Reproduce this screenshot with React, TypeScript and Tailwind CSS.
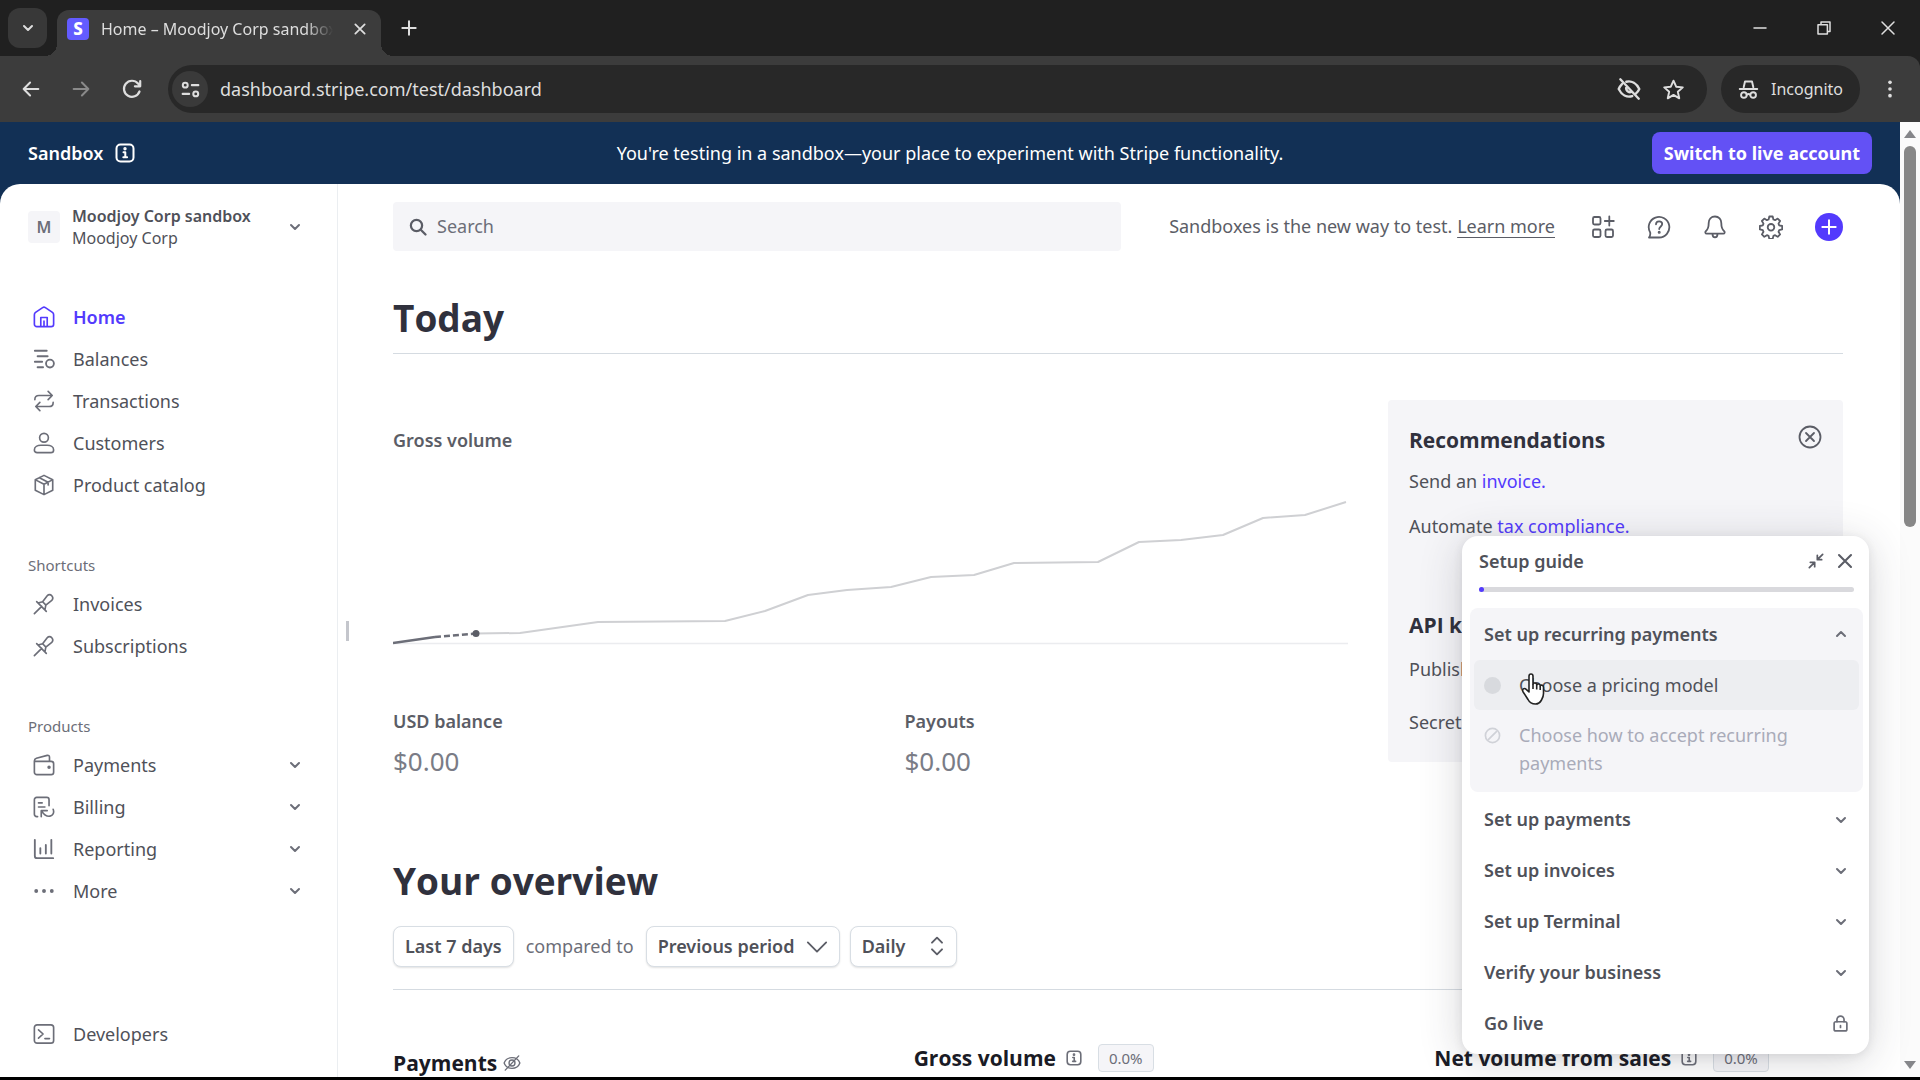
import React from "react";

type IconProps = { className?: string; children: React.ReactNode; sw?: number; box?: number };

function Icon({ className = "size-[22px]", children, sw = 1.8, box = 24 }: IconProps) {
  return (
    <svg
      viewBox={`0 0 ${box} ${box}`}
      className={`shrink-0 ${className}`}
      fill="none"
      stroke="currentColor"
      strokeWidth={sw}
      strokeLinecap="round"
      strokeLinejoin="round"
      aria-hidden="true"
    >
      {children}
    </svg>
  );
}

const Chevron = ({ up = false }: { up?: boolean }) => (
  <Icon className="size-3 text-[#6c6e78]" box={12} sw={2}>
    <path d={up ? "M2 8l4-4 4 4" : "M2 4l4 4 4-4"} />
  </Icon>
);

const InfoIcon = ({ className }: { className: string }) => (
  <Icon className={className} box={20} sw={2}>
    <rect x="1.5" y="1.5" width="17" height="17" rx="4" />
    <path d="M8.5 9.3h1.8v4.7M8.3 14.2h3.8" />
    <circle cx="10" cy="5.8" r="0.7" fill="currentColor" />
  </Icon>
);

const icons = {
  home: (
    <Icon>
      <path d="M1.5 9.5c0-1 .4-1.9 1.3-2.5L10.5 1.7a2.6 2.6 0 0 1 3 0L21.2 7c.9.6 1.3 1.5 1.3 2.5v10.3a2.7 2.7 0 0 1-2.7 2.7H4.2a2.7 2.7 0 0 1-2.7-2.7z" />
      <path d="M8.5 22v-9.5h7V22M12 16.5V22" />
    </Icon>
  ),
  balances: (
    <Icon sw={2}>
      <path d="M2 3h13M5 9h11M2 15h8M5 21h6" />
      <circle cx="18.5" cy="17" r="4.3" />
    </Icon>
  ),
  transactions: (
    <Icon>
      <path d="M2 10.5C2 7.5 4 6 6.5 6H21M16.5 1.5L21 6l-4.5 4.5M22 13.5c0 3-2 4.5-4.5 4.5H3M7.5 22.5L3 18l4.5-4.5" />
    </Icon>
  ),
  customers: (
    <Icon>
      <circle cx="12" cy="6.3" r="4.8" />
      <path d="M1.5 19.5c0-3.3 3.5-5 7-5h7c3.5 0 7 1.7 7 5 0 1.9-1.2 3-3 3h-15c-1.8 0-3-1.1-3-3z" />
    </Icon>
  ),
  box: (
    <Icon>
      <path d="M12 1.5l9.5 4.7v11.6L12 22.5l-9.5-4.7V6.2zM2.8 6.4L12 11.2l9.2-4.8M12 11.2v11M7 4l9.5 4.9V12" />
    </Icon>
  ),
  pin: (
    <Icon>
      <path d="M9.5 14.5L1.5 22.5M4 9.5L14.5 20M5.5 11l5-1.5 5-6.5c1.5-1.6 3.5-1.6 5 0s1.6 3.5 0 5L14 13.3 13 18.5M10.5 9.5l3.6 3.8" />
    </Icon>
  ),
  wallet: (
    <Icon>
      <path d="M1.5 8h18.3a2.7 2.7 0 0 1 2.7 2.7v9.1a2.7 2.7 0 0 1-2.7 2.7H4.2a2.7 2.7 0 0 1-2.7-2.7V7.5c0-1.5.8-2.4 2.2-2.8L15.5 1.5c1.5-.3 2.5.5 2.5 2V8" />
      <circle cx="17.5" cy="14.5" r="1" fill="currentColor" />
    </Icon>
  ),
  billing: (
    <Icon>
      <path d="M5 22.5H4a2.5 2.5 0 0 1-2.5-2.5V4A2.5 2.5 0 0 1 4 1.5h11A2.5 2.5 0 0 1 17.5 4v6.5M6 7.5h4M6 12h7M9 22.5V16h6.5M9.5 16.5c2.5 4 6 6 9 5.5 3-.5 5-3.5 3.5-7.5" />
    </Icon>
  ),
  reporting: (
    <Icon sw={2}>
      <path d="M2 2v17.5A2.5 2.5 0 0 0 4.5 22H22M8 11v6M14 7.5V17M20 2v15" />
    </Icon>
  ),
  more: (
    <Icon sw={0}>
      <g fill="currentColor">
        <circle cx="3.5" cy="12" r="2.1" />
        <circle cx="12" cy="12" r="2.1" />
        <circle cx="20.5" cy="12" r="2.1" />
      </g>
    </Icon>
  ),
  dev: (
    <Icon>
      <rect x="1.5" y="2" width="21" height="20" rx="3" />
      <path d="M6 7.5l5 4.5-5 4.5M13 17h5" />
    </Icon>
  ),
};

type NavItem = { icon: keyof typeof icons; label: string; active?: boolean; expand?: boolean };

function NavRow({ icon, label, active, expand }: NavItem) {
  return (
    <a
      href="#"
      className={`flex h-[42px] items-center gap-[18px] pl-[5px] ${active ? "font-semibold text-[#533afd]" : "text-[#4f5159]"}`}
    >
      <span className={active ? "text-[#533afd]" : "text-[#6c6e78]"}>{icons[icon]}</span>
      <span className="flex-1">{label}</span>
      {expand && <Chevron />}
    </a>
  );
}

const mainNav: NavItem[] = [
  { icon: "home", label: "Home", active: true },
  { icon: "balances", label: "Balances" },
  { icon: "transactions", label: "Transactions" },
  { icon: "customers", label: "Customers" },
  { icon: "box", label: "Product catalog" },
];
const shortcuts: NavItem[] = [
  { icon: "pin", label: "Invoices" },
  { icon: "pin", label: "Subscriptions" },
];
const products: NavItem[] = [
  { icon: "wallet", label: "Payments", expand: true },
  { icon: "billing", label: "Billing", expand: true },
  { icon: "reporting", label: "Reporting", expand: true },
  { icon: "more", label: "More", expand: true },
];

function BrowserChrome() {
  return (
    <header className="shrink-0 bg-[#202020] text-[#dedede]">
      <div className="flex h-14 items-end">
        <button aria-label="Search tabs" className="mb-2 ml-2 flex h-10 w-[39px] items-center justify-center rounded-xl bg-[#383838]">
          <Icon className="size-3" box={12} sw={2}>
            <path d="M2 4l4 4 4-4" />
          </Icon>
        </button>
        <div className="relative ml-2.5 flex h-[46px] w-[324px] items-center rounded-t-xl bg-[#3c3c3c] pr-3 pb-2 pl-2.5 text-[16px]">
          <span className="absolute bottom-0 -left-3 size-3 bg-[radial-gradient(circle_at_0_0,#202020_12px,#3c3c3c_12px)]" />
          <span className="absolute -right-3 bottom-0 size-3 bg-[radial-gradient(circle_at_100%_0,#202020_12px,#3c3c3c_12px)]" />
          <span className="flex h-[22px] w-[22px] items-center justify-center rounded-sm bg-[#635bff] text-[17px] font-extrabold text-white">
            S
          </span>
          <span className="ml-3 w-[232px] overflow-hidden whitespace-nowrap mask-[linear-gradient(to_right,black_88%,transparent)]">
            Home – Moodjoy Corp sandbox
          </span>
          <button aria-label="Close tab" className="ml-5">
            <Icon className="size-3.5" sw={3}>
              <path d="M4 4l16 16M20 4L4 20" />
            </Icon>
          </button>
        </div>
        <button aria-label="New tab" className="mb-[18px] ml-[18px]">
          <Icon className="size-5" sw={2.4}>
            <path d="M12 4v16M4 12h16" />
          </Icon>
        </button>
        <div className="mb-[19px] ml-auto flex items-center gap-[46px] pr-[23px]">
          <button aria-label="Minimize">
            <Icon className="size-[18px]" sw={2}>
              <path d="M4 12h16" />
            </Icon>
          </button>
          <button aria-label="Restore">
            <Icon className="size-[18px]" sw={2}>
              <path d="M4 7.5h12.5V20H4zM8 7V4h12v12.5h-3.5" />
            </Icon>
          </button>
          <button aria-label="Close">
            <Icon className="size-[18px]" sw={2}>
              <path d="M4 4l16 16M20 4L4 20" />
            </Icon>
          </button>
        </div>
      </div>
      <div className="flex h-[66px] items-center rounded-tr-xl bg-[#3c3c3c] pl-5">
        <button aria-label="Back">
          <Icon className="size-[22px]" sw={2.2}>
            <path d="M20 12H4M11 5l-7 7 7 7" />
          </Icon>
        </button>
        <button aria-label="Forward" className="ml-7 text-[#8a8a8a]">
          <Icon className="size-[22px]" sw={2.2}>
            <path d="M4 12h16M13 5l7 7-7 7" />
          </Icon>
        </button>
        <button aria-label="Reload" className="ml-7">
          <Icon className="size-6" sw={2.2}>
            <path d="M19.5 14.5A8 8 0 1 1 18 6.5l2 2.2M20.2 4v5.3h-5.3" />
          </Icon>
        </button>
        <div className="ml-6 flex h-12 flex-1 items-center rounded-full bg-[#282828] pr-[22px] pl-1">
          <span className="flex size-9 items-center justify-center rounded-full bg-[#3a3a3a]">
            <Icon className="size-[21px]" sw={2.3}>
              <circle cx="6" cy="7" r="2.8" />
              <path d="M13.5 7H21M3 17h7.5" />
              <circle cx="18" cy="17" r="2.8" />
            </Icon>
          </span>
          <input
            aria-label="Address"
            defaultValue="dashboard.stripe.com/test/dashboard"
            className="ml-3 min-w-0 flex-1 bg-transparent outline-none"
          />
          <Icon className="size-[26px]" sw={2.2}>
            <path d="M4 3l17 18M9.5 5.3c5-1.3 9.500 1.700 12 6.700-.8 1.700-1.800 3-3 4M5.500 7.500C4.300 8.700 3.300 10.200 2.500 12c2.700 5.500 7.500 8 12.500 6.500M10 9.500a3.500 3.500 0 0 0 4.500 5" />
          </Icon>
          <Icon className="ml-5 size-[23px]" sw={2}>
            <path d="M12 2.800l2.800 6.300 6.900.7-5.200 4.600 1.500 6.800-6-3.600-6 3.600 1.500-6.800-5.200-4.600 6.900-.7z" />
          </Icon>
        </div>
        <button className="ml-3.5 flex h-12 items-center gap-3 rounded-full bg-[#282828] px-[17px] text-[16px]">
          <Icon className="size-[21px]" sw={2.2}>
            <path d="M6.5 9.5L8 2.800h8l1.500 6.700M2 11.500h20M10 18c1.200-1 2.800-1 4 0" />
            <circle cx="6.7" cy="18.3" r="3.2" />
            <circle cx="17.3" cy="18.3" r="3.2" />
          </Icon>
          Incognito
        </button>
        <button aria-label="Browser menu" className="mx-5">
          <Icon className="size-5" sw={0}>
            <g fill="currentColor">
              <circle cx="12" cy="4" r="2.2" />
              <circle cx="12" cy="12" r="2.2" />
              <circle cx="12" cy="20" r="2.2" />
            </g>
          </Icon>
        </button>
      </div>
    </header>
  );
}

function Sidebar() {
  return (
    <aside className="relative flex w-[338px] shrink-0 flex-col border-r border-[#ebeef1] pt-[21px] pr-9 pb-[22px] pl-7">
      <button className="flex items-center text-left text-[16px] text-[#4f5159]">
        <span className="flex size-8 items-center justify-center rounded bg-[#f5f5f8] font-semibold text-[#6c6e78]">M</span>
        <span className="ml-3 flex-1 leading-[22px]">
          <span className="block font-semibold">Moodjoy Corp sandbox</span>
          <span className="block">Moodjoy Corp</span>
        </span>
        <Chevron />
      </button>
      <nav className="mt-[47px] flex flex-1 flex-col">
        {mainNav.map((n) => (
          <NavRow key={n.label} {...n} />
        ))}
        <h2 className="mt-[49px] mb-2 text-[15px] leading-5 text-[#6c6e78]">Shortcuts</h2>
        {shortcuts.map((n) => (
          <NavRow key={n.label} {...n} />
        ))}
        <h2 className="mt-[49px] mb-2 text-[15px] leading-5 text-[#6c6e78]">Products</h2>
        {products.map((n) => (
          <NavRow key={n.label} {...n} />
        ))}
        <div className="mt-auto">
          <NavRow icon="dev" label="Developers" />
        </div>
      </nav>
      <span className="absolute top-[437px] -right-3 h-5 w-[3px] bg-[#c4c6cc]" />
    </aside>
  );
}

function TopBar() {
  return (
    <div className="flex items-center text-[#5b5d66]">
      <label className="flex h-[49px] flex-1 items-center gap-2.5 rounded bg-[#f5f5f8] px-4">
        <Icon className="size-[18px]" sw={3}>
          <circle cx="10" cy="10" r="7.5" />
          <path d="M16 16l6 6" />
        </Icon>
        <input aria-label="Search" placeholder="Search" className="min-w-0 flex-1 bg-transparent outline-none placeholder:text-[#6c6e78]" />
      </label>
      <p className="ml-12 whitespace-nowrap">
        Sandboxes is the new way to test.{" "}
        <a href="#" className="underline decoration-1 underline-offset-4">
          Learn more
        </a>
      </p>
      <div className="ml-9 flex items-center gap-8">
        <button aria-label="Apps">
          <Icon className="size-6">
            <rect x="2" y="2" width="7.5" height="7.5" rx="1.5" />
            <rect x="2" y="14.5" width="7.5" height="7.5" rx="1.5" />
            <rect x="14.5" y="14.5" width="7.5" height="7.5" rx="1.5" />
            <path d="M18.3 1.5v9M13.8 6h9" />
          </Icon>
        </button>
        <button aria-label="Help">
          <Icon className="size-6">
            <path d="M2 22.5h10A10.3 10.3 0 1 0 3.2 17.5c.3 1.8 0 3.5-1.200 5z" />
            <path d="M9 9.3c0-1.8 1.3-3 3.1-3s3.1 1.2 3.1 2.8c0 2.2-3 2.6-3 5" />
            <circle cx="12.2" cy="17.3" r="0.6" fill="currentColor" />
          </Icon>
        </button>
        <button aria-label="Notifications">
          <Icon className="size-6">
            <path d="M12 1.5c-3.8 0-6.3 2.7-6.3 6.5 0 5-.8 6.5-2.9 8.2-1 .9-.5 2.500.9 2.500h16.600c1.400 0 1.900-1.600.9-2.500-2.100-1.700-2.900-3.200-2.900-8.200 0-3.800-2.500-6.500-6.300-6.500zM9.500 19c0 1.900 1 3.300 2.500 3.300s2.500-1.400 2.500-3.300" />
          </Icon>
        </button>
        <button aria-label="Settings">
          <Icon className="size-6">
            <path d="M10.300 1.500h3.400l.7 3 1.700.7 2.600-1.600 2.400 2.400-1.600 2.600.7 1.700 3 .7v3.400l-3 .7-.7 1.700 1.600 2.600-2.400 2.400-2.600-1.600-1.700.7-.7 3h-3.400l-.7-3-1.700-.7-2.600 1.600-2.400-2.400 1.600-2.600-.7-1.700-3-.7V11l3-.7.7-1.700L2.900 6l2.400-2.400 2.600 1.600 1.700-.7z" />
            <circle cx="12" cy="12.3" r="3.3" />
          </Icon>
        </button>
        <button aria-label="Create" className="flex size-7 items-center justify-center rounded-full bg-[#533afd] text-white">
          <Icon className="size-4" sw={3}>
            <path d="M12 2v20M2 12h20" />
          </Icon>
        </button>
      </div>
    </div>
  );
}

const forecast =
  "83,21.5 127,21 205,10 332,9 372,-1 415,-17 454,-22 498,-25 538,-35 581,-37 621,-49 705,-50 746,-70 788,-72 830,-77 870,-94 912,-97 953,-110";

function VolumeChart() {
  return (
    <svg viewBox="0 -120 955 155" className="mt-10 block w-full" fill="none" aria-label="Gross volume chart">
      <path d="M0 31.5h955" stroke="#ebecef" strokeWidth="1.5" />
      <polyline points={forecast} stroke="#cfd0d3" strokeWidth="2" strokeLinejoin="round" />
      <path d="M0 31L42 25" stroke="#6c6e78" strokeWidth="2.5" />
      <path d="M42 25L83 21.5" stroke="#6c6e78" strokeWidth="2.5" strokeDasharray="6 3" />
      <circle cx="83" cy="21.5" r="3.5" fill="#5b5d66" />
    </svg>
  );
}

const sideHead = "font-['Open_Sans','Noto_Sans',sans-serif] text-[21px] leading-7 font-bold whitespace-nowrap";

function Recommendations() {
  return (
    <section className="w-[455px] shrink-0 rounded bg-[#f5f5f8] px-[21px] pt-[25px] pb-7 text-[#4f5159]">
      <div className="flex items-center justify-between">
        <h2 className={`${sideHead} text-[#30313d]`}>Recommendations</h2>
        <button aria-label="Dismiss" className="text-[#5b5d66]">
          <Icon className="mb-1.5 size-6">
            <circle cx="12" cy="12" r="10.5" />
            <path d="M8 8l8 8M16 8l-8 8" />
          </Icon>
        </button>
      </div>
      <p className="mt-[14px] leading-6">
        Send an <a href="#" className="text-[#533afd]">invoice.</a>
      </p>
      <p className="mt-[21px] leading-6">
        Automate <a href="#" className="text-[#533afd]">tax compliance.</a>
      </p>
      <h2 className={`${sideHead} mt-[73px] text-[#30313d]`}>API keys</h2>
      <p className="mt-[18px] leading-6">Publishable key</p>
      <p className="mt-[29px] leading-6">Secret key</p>
    </section>
  );
}

function Metric({ title }: { title: string }) {
  return (
    <div className="flex h-7 items-center">
      <h3 className={`${sideHead} text-[#1a1b25]`}>{title}</h3>
      <InfoIcon className="ml-2.5 size-4 text-[#6c6e78]" />
      <span className="ml-4 rounded border border-[#d8dee4] bg-[#f5f5f8] px-2.5 text-[15px] leading-[26px] text-[#6c6e78]">0.0%</span>
    </div>
  );
}

const filterBox =
  "h-[41px] rounded-lg border border-[#d8dee4] bg-white font-semibold text-[#4f5159] shadow-[0_1px_2px_rgba(0,0,0,0.12)]";

const pageHead = "font-['Open_Sans','Noto_Sans',sans-serif] text-[37px] leading-[44px] font-bold text-[#30313d]";

function Main() {
  return (
    <main className="min-w-0 flex-1 overflow-hidden pt-[18px] pr-[57px] pl-[55px]">
      <TopBar />
      <h1 className={`${pageHead} mt-[45px] border-b border-[#d5dbe1] pb-[13px]`}>Today</h1>
      <div className="mt-[46px] flex items-start gap-10">
        <section className="min-w-0 flex-1 pt-7">
          <h2 className="leading-6 font-semibold text-[#5b5d66]">Gross volume</h2>
          <VolumeChart />
          <div className="mt-[62px] grid grid-cols-2 gap-[68px]">
            {["USD balance", "Payouts"].map((t) => (
              <div key={t}>
                <h2 className="leading-6 font-semibold text-[#5b5d66]">{t}</h2>
                <p className="mt-3 text-[26px] leading-8 text-[#7a7c86]">$0.00</p>
              </div>
            ))}
          </div>
        </section>
        <Recommendations />
      </div>
      <h1 className={`${pageHead} mt-[82px]`}>Your overview</h1>
      <div className="mt-[23px] flex items-center border-b border-[#d5dbe1] pb-[22px]">
        <button className={`${filterBox} px-[11px]`}>Last 7 days</button>
        <span className="mx-3 text-[#6c6e78]">compared to</span>
        <label className="relative text-[#5b5d66]">
          <select aria-label="Comparison period" className={`${filterBox} appearance-none pr-11 pl-[11px]`}>
            <option>Previous period</option>
          </select>
          <Icon className="pointer-events-none absolute top-2.5 right-3 size-[22px]" sw={2}>
            <path d="M2 7l10 10L22 7" />
          </Icon>
        </label>
        <label className="relative ml-2.5 text-[#5b5d66]">
          <select aria-label="Interval" className={`${filterBox} appearance-none pr-[50px] pl-[11px]`}>
            <option>Daily</option>
          </select>
          <Icon className="pointer-events-none absolute top-2.5 right-2.5 size-5" sw={2.3}>
            <path d="M6 8l6-6 6 6M6 16l6 6 6-6" />
          </Icon>
        </label>
      </div>
      <div className="mt-[54px] grid grid-cols-3 gap-28">
        <div className="flex items-center pt-[5px]">
          <h3 className={`${sideHead} text-[#1a1b25]`}>Payments</h3>
          <Icon className="ml-1.5 size-[18px] text-[#6c6e78]">
            <path d="M1.5 12C5 2.5 19 2.5 22.5 12 19 21.5 5 21.5 1.5 12z" />
            <circle cx="12" cy="12" r="4" />
            <path d="M21 2.5L3 21.5" />
          </Icon>
        </div>
        <Metric title="Gross volume" />
        <Metric title="Net volume from sales" />
      </div>
    </main>
  );
}

function SetupGuide() {
  return (
    <section className="absolute right-[31px] bottom-[23px] w-[407px] rounded-2xl bg-white pt-[13px] pr-1.5 pb-[5px] pl-2 text-[#4f5159] shadow-[0_6px_44px_rgba(48,49,61,0.2),0_2px_10px_rgba(48,49,61,0.1)]">
      <div className="flex h-6 items-center px-[9px]">
        <h2 className="flex-1 leading-6 font-semibold">Setup guide</h2>
        <button aria-label="Collapse" className="text-[#5b5d66]">
          <Icon className="size-4" sw={2.6}>
            <path d="M22 2l-8 8M14 3.5V10h6.5M2 22l8-8M3.5 14H10v6.5" />
          </Icon>
        </button>
        <button aria-label="Close guide" className="ml-3 text-[#5b5d66]">
          <Icon className="size-[18px]" sw={2.8}>
            <path d="M4 4l16 16M20 4L4 20" />
          </Icon>
        </button>
      </div>
      <div className="mx-[9px] mt-3.5 h-[5px] rounded-full bg-[#d9d9dd]">
        <div className="size-[5px] rounded-full bg-[#533afd]" />
      </div>
      <div className="mt-4 rounded-lg bg-[#f5f5f8] pb-[15px]">
        <button className="flex h-[52px] w-full items-center justify-between pr-4 pl-3.5 font-semibold">
          Set up recurring payments <Chevron up />
        </button>
        <a href="#" className="relative mx-1 flex h-[50px] items-center rounded-md bg-[#edeef1] pl-2.5">
          <span className="size-[17px] rounded-full bg-[#d8dade]" />
          <span className="ml-[18px]">Choose a pricing model</span>
          <svg viewBox="0 0 26 34" className="absolute top-3 left-[46px] h-[34px] w-[26px]" fill="#fff" stroke="#222" strokeWidth="1.6" strokeLinejoin="round" aria-hidden="true">
            <path d="M9 20V4.200c0-3 4-3 4 0V12c.6-1.500 3.500-1.200 3.700.7.8-1.200 3.300-.9 3.500.9 1-1 3.300-.4 3.300 1.600v6.300c0 3-.8 4.500-2 6.500-1.300 2.400-3 4-6 4-4 0-6-1.500-7.500-4.500L3 19.700c-1.300-2.600 1.300-4.200 3.200-2.300z" />
            <path d="M13 12v5M16.700 13v4.500M20.200 14v4" />
          </svg>
        </a>
        <div className="mt-[11px] flex pr-12 pl-3.5 text-[#a9abb9]">
          <Icon className="mt-1.5 size-[17px] text-[#d0d2d8]" sw={2.4}>
            <circle cx="12" cy="12" r="10" />
            <path d="M6.5 17.5l11-11" />
          </Icon>
          <span className="ml-[18px] leading-7">Choose how to accept recurring payments</span>
        </div>
      </div>
      <div className="mt-0.5 flex flex-col">
        {["Set up payments", "Set up invoices", "Set up Terminal", "Verify your business"].map((t) => (
          <button key={t} className="flex h-[51px] items-center justify-between pr-4 pl-3.5 font-semibold">
            {t} <Chevron />
          </button>
        ))}
        <button className="flex h-[51px] items-center justify-between pr-3.5 pl-3.5 font-semibold">
          Go live
          <Icon className="size-[17px] text-[#6c6e78]" sw={2.4}>
            <rect x="3" y="9.5" width="18" height="13" rx="2.5" />
            <path d="M7 9.5V6.500a5 5 0 0 1 10 0v3M12 15v2.500" />
          </Icon>
        </button>
      </div>
    </section>
  );
}

function ScrollRail() {
  return (
    <div className="flex w-5 shrink-0 flex-col items-center bg-[#fbfbfb] pt-2 pb-2 text-[#85868a]">
      <svg viewBox="0 0 12 8" className="h-2 w-3" fill="currentColor" aria-hidden="true">
        <path d="M6 0l6 8H0z" />
      </svg>
      <div className="my-2 flex w-full flex-1 justify-center">
        <div className="h-[42%] w-3 rounded-full bg-[#878787]" />
      </div>
      <svg viewBox="0 0 12 8" className="h-2 w-3" fill="currentColor" aria-hidden="true">
        <path d="M6 8l6-8H0z" />
      </svg>
    </div>
  );
}

export default function App() {
  return (
    <div className="flex h-screen flex-col overflow-hidden border-b-[3px] border-black bg-white font-['Noto_Sans','Open_Sans',sans-serif] text-[18px]">
      <BrowserChrome />
      <div className="flex min-h-0 flex-1">
        <div className="relative flex min-w-0 flex-1 flex-col bg-[#123055]">
          <div className="flex h-[62px] shrink-0 items-center px-7 text-white">
            <div className="flex flex-1 items-center gap-3 font-semibold">
              Sandbox <InfoIcon className="size-5" />
            </div>
            <p className="whitespace-nowrap">You're testing in a sandbox—your place to experiment with Stripe functionality.</p>
            <div className="flex flex-1 justify-end">
              <button className="h-[42px] rounded-lg bg-[#6351f5] px-3 font-bold whitespace-nowrap">Switch to live account</button>
            </div>
          </div>
          <div className="flex min-h-0 flex-1 overflow-hidden rounded-t-[20px] bg-white">
            <Sidebar />
            <Main />
          </div>
          <SetupGuide />
        </div>
        <ScrollRail />
      </div>
    </div>
  );
}
